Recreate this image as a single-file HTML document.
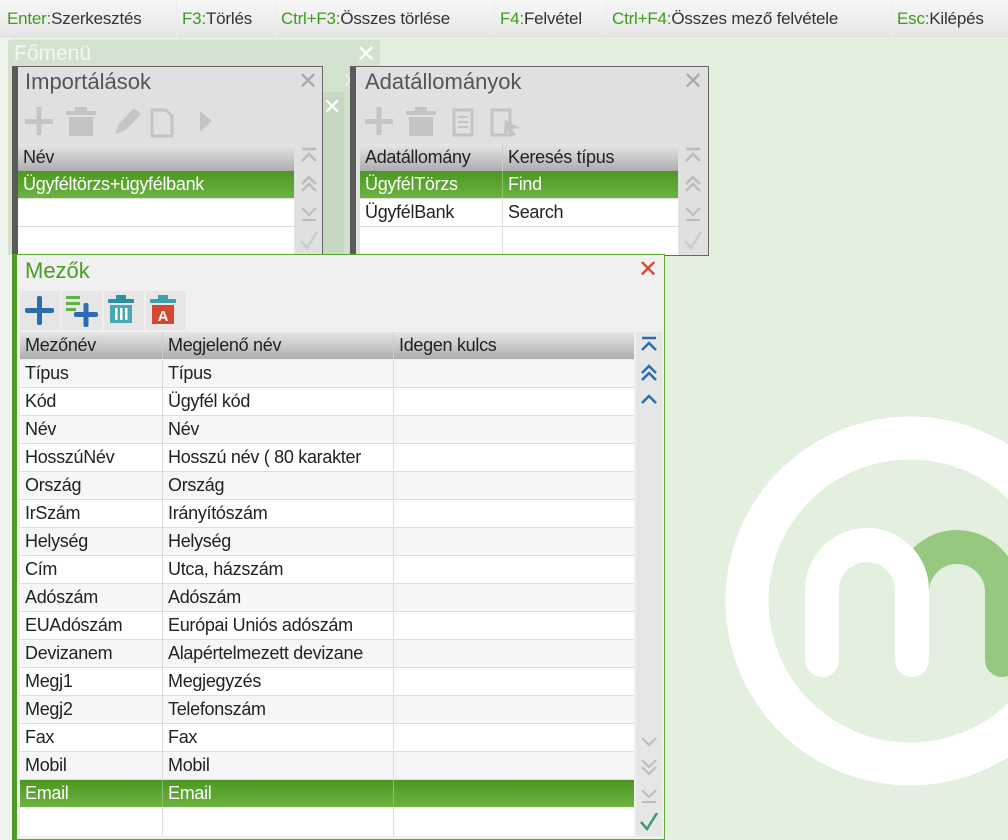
<!DOCTYPE html>
<html><head><meta charset="utf-8"><style>
*{margin:0;padding:0;box-sizing:border-box}
body{width:1008px;height:840px;overflow:hidden;background:#e3f0df;font-family:"Liberation Sans",sans-serif;position:relative;color:#222}
.abs{position:absolute}
.bar{left:0;top:0;width:1008px;height:37px;background:linear-gradient(#f7f7f7,#e6e6e6);border-bottom:1px solid #ddd}
.bar span{position:absolute;top:9px;font-size:17px;color:#333;white-space:nowrap;letter-spacing:-0.2px}
.bar b{font-weight:normal;color:#3e9b1c}
.sep{position:absolute;top:0;width:1px;height:37px;background:#ececec}
.win{position:absolute;background:#e0e0e0;border:1px solid #666;border-left:6px solid #5a5a5a}
.title{position:absolute;font-size:22px;color:#555}
.x{position:absolute;font-size:24px;color:#aaa;line-height:24px}
.cell{position:absolute;font-size:18px;line-height:27px;padding-left:5px;white-space:nowrap;overflow:hidden;letter-spacing:-0.3px}
.hdr{background:linear-gradient(#e6e6e6,#adadad)}
.sel{background:linear-gradient(#4b9720,#6db343);color:#fff}
.scroll{position:absolute;background:#e6e6e6}
svg.sb{position:absolute;width:26px;height:26px}
</style></head><body>
<svg width="0" height="0" style="position:absolute">
<defs>
<symbol id="top" viewBox="0 0 26 26"><path d="M6 5 H20 M6 17 L13 10 L20 17" fill="none" stroke="currentColor" stroke-width="2.5"/></symbol>
<symbol id="dup" viewBox="0 0 26 26"><path d="M6 13 L13 6 L20 13 M6 20 L13 13 L20 20" fill="none" stroke="currentColor" stroke-width="2.5"/></symbol>
<symbol id="up" viewBox="0 0 26 26"><path d="M6 17 L13 10 L20 17" fill="none" stroke="currentColor" stroke-width="2.5"/></symbol>
<symbol id="down" viewBox="0 0 26 26"><path d="M6 10 L13 17 L20 10" fill="none" stroke="currentColor" stroke-width="2"/></symbol>
<symbol id="ddown" viewBox="0 0 26 26"><path d="M6 6 L13 13 L20 6 M6 13 L13 20 L20 13" fill="none" stroke="currentColor" stroke-width="2"/></symbol>
<symbol id="bot" viewBox="0 0 26 26"><path d="M6 9 L13 16 L20 9 M6 21 H20" fill="none" stroke="currentColor" stroke-width="2"/></symbol>
<symbol id="chk" viewBox="0 0 26 26"><path d="M5 14 L11 21 L21 5" fill="none" stroke="currentColor" stroke-width="2.5"/></symbol>
</defs></svg>

<div class="abs bar">
<span style="left:7px"><b>Enter:</b>Szerkesztés</span>
<div class="sep" style="left:176px"></div>
<span style="left:182px"><b>F3:</b>Törlés</span>
<div class="sep" style="left:275px"></div>
<span style="left:281px"><b>Ctrl+F3:</b>Összes törlése</span>
<div class="sep" style="left:494px"></div>
<span style="left:500px"><b>F4:</b>Felvétel</span>
<div class="sep" style="left:606px"></div>
<span style="left:612px"><b>Ctrl+F4:</b>Összes mező felvétele</span>
<div class="sep" style="left:891px"></div>
<span style="left:897px"><b>Esc:</b>Kilépés</span>
</div>

<!-- logo -->
<svg class="abs" style="left:0;top:0" width="1008" height="840">
<circle cx="910" cy="601" r="163" fill="none" stroke="#fff" stroke-width="43"/>
<path d="M912 592 A45 45 0 0 1 1002 592 L1002 660" fill="none" stroke="#96c880" stroke-width="34" stroke-linecap="round"/>
<path d="M822 660 L822 590 A45 45 0 0 1 912 590 L912 660" fill="none" stroke="#fff" stroke-width="34" stroke-linecap="round"/>
<rect x="0" y="38" width="12" height="802" fill="#eef3ec"/>
</svg>

<!-- back windows -->
<div class="abs" style="left:8px;top:40px;width:372px;height:215px;background:#d3e2cf"></div>
<div class="abs" style="left:14px;top:42px;font-size:21px;color:#f4f8f2">Főmenü</div>
<div class="abs" style="left:356px;top:40px;font-size:24px;color:#fff">✕</div>
<div class="abs" style="left:322px;top:92px;width:22px;height:163px;background:#c6d7c2"></div>
<div class="abs" style="left:323px;top:94px;font-size:22px;color:#fff">✕</div>
<div class="abs" style="left:342px;top:68px;font-size:22px;color:#eee">✕</div>

<!-- Importálások -->
<div class="win" style="left:12px;top:66px;width:311px;height:190px"></div>
<div class="title" style="left:25px;top:69px">Importálások</div>
<div class="x" style="left:298px;top:70px">✕</div>
<svg class="abs" style="left:22px;top:104px" width="200" height="34">
<g fill="#c4c4c4">
<rect x="3" y="15" width="28" height="5"/><rect x="14.5" y="3" width="5" height="28"/>
<rect x="44" y="7" width="30" height="4"/><rect x="53" y="3" width="12" height="4"/><rect x="47" y="13" width="24" height="19"/>
<path d="M93 30 L97 20 L112 4 L119 10 L104 26 Z"/>
<path d="M130 6 h14 l6 6 v20 h-20 z" fill="none" stroke="#c4c4c4" stroke-width="3"/>
<path d="M178 7 L190 17 L178 28 Z"/>
</g></svg>
<div class="cell hdr" style="left:18px;top:144px;width:276px">Név</div>
<div class="cell sel" style="left:18px;top:171px;width:276px">Ügyféltörzs+ügyfélbank</div>
<div class="cell" style="left:18px;top:199px;width:276px;background:#fff;border-bottom:1px solid #ddd">&nbsp;</div>
<div class="cell" style="left:18px;top:227px;width:276px;height:28px;background:#fff">&nbsp;</div>
<svg class="sb" style="left:296px;top:144px;color:#bbb"><use href="#top"/></svg>
<svg class="sb" style="left:296px;top:171px;color:#bbb"><use href="#dup"/></svg>
<svg class="sb" style="left:296px;top:199px;color:#bbb"><use href="#bot"/></svg>
<svg class="sb" style="left:296px;top:227px;color:#ccc"><use href="#chk"/></svg>

<!-- Adatállományok -->
<div class="win" style="left:350px;top:66px;width:359px;height:190px"></div>
<div class="title" style="left:365px;top:69px">Adatállományok</div>
<div class="x" style="left:683px;top:70px">✕</div>
<svg class="abs" style="left:362px;top:104px" width="170" height="34">
<g fill="#c4c4c4">
<rect x="3" y="15" width="28" height="5"/><rect x="14.5" y="3" width="5" height="28"/>
<rect x="44" y="7" width="30" height="4"/><rect x="53" y="3" width="12" height="4"/><rect x="47" y="13" width="24" height="19"/>
<rect x="92" y="6" width="18" height="25" fill="none" stroke="#c4c4c4" stroke-width="3"/>
<rect x="96" y="12" width="10" height="2"/><rect x="96" y="17" width="10" height="2"/><rect x="96" y="22" width="10" height="2"/>
<rect x="130" y="6" width="18" height="25" fill="none" stroke="#c4c4c4" stroke-width="3"/>
<path d="M143 16 L158 24 L150 25 L154 31 L150 32 L146 27 L142 31 Z"/>
</g></svg>
<div class="cell hdr" style="left:360px;top:144px;width:143px;border-right:1px solid #ccc">Adatállomány</div>
<div class="cell hdr" style="left:503px;top:144px;width:175px">Keresés típus</div>
<div class="cell sel" style="left:360px;top:171px;width:143px;border-right:1px solid #8bc36a">ÜgyfélTörzs</div>
<div class="cell sel" style="left:503px;top:171px;width:175px">Find</div>
<div class="cell" style="left:360px;top:199px;width:143px;background:#fff;border-right:1px solid #ddd;border-bottom:1px solid #ddd">ÜgyfélBank</div>
<div class="cell" style="left:503px;top:199px;width:175px;background:#fff;border-bottom:1px solid #ddd">Search</div>
<div class="cell" style="left:360px;top:227px;width:143px;height:28px;background:#fff;border-right:1px solid #ddd">&nbsp;</div>
<div class="cell" style="left:503px;top:227px;width:175px;height:28px;background:#fff">&nbsp;</div>
<svg class="sb" style="left:680px;top:144px;color:#bbb"><use href="#top"/></svg>
<svg class="sb" style="left:680px;top:171px;color:#bbb"><use href="#dup"/></svg>
<svg class="sb" style="left:680px;top:199px;color:#bbb"><use href="#bot"/></svg>
<svg class="sb" style="left:680px;top:227px;color:#ccc"><use href="#chk"/></svg>

<!-- Mezők -->
<div class="abs" style="left:12px;top:254px;width:653px;height:586px;background:#f0f0f0;border:1px solid #5aa832;border-left:5px solid #4e9d27"></div>
<div class="title" style="left:25px;top:258px;color:#4b9d22">Mezők</div>
<div class="abs" style="left:638px;top:257px;font-size:24px;color:#d9472f;line-height:26px">✕</div>
<div class="abs" style="left:20px;top:291px;width:40px;height:39px;background:#e6e6e6"></div>
<div class="abs" style="left:62px;top:291px;width:40px;height:39px;background:#e6e6e6"></div>
<div class="abs" style="left:104px;top:291px;width:40px;height:39px;background:#e6e6e6"></div>
<div class="abs" style="left:146px;top:291px;width:40px;height:39px;background:#e6e6e6"></div>
<svg class="abs" style="left:20px;top:291px" width="170" height="40">
<rect x="5" y="17" width="29" height="5" rx="2" fill="#2d6cb0"/><rect x="17" y="5" width="5" height="29" rx="2" fill="#2d6cb0"/>
<rect x="46" y="5" width="14" height="3" fill="#5db248"/><rect x="46" y="11" width="14" height="3" fill="#5db248"/><rect x="46" y="17" width="10" height="3" fill="#5db248"/>
<rect x="54" y="21" width="24" height="5" rx="2" fill="#2d6cb0"/><rect x="63.5" y="12" width="5" height="24" rx="2" fill="#2d6cb0"/>
<rect x="88" y="8" width="26" height="4" rx="1" fill="#2e8fa4"/><rect x="96" y="4" width="10" height="4" fill="#2e8fa4"/>
<path d="M90 14 h22 v18 h-22 z" fill="#46a8b5"/><rect x="95" y="17" width="2.5" height="12" fill="#fff"/><rect x="100" y="17" width="2.5" height="12" fill="#fff"/><rect x="105" y="17" width="2.5" height="12" fill="#fff"/>
<rect x="130" y="8" width="26" height="4" rx="1" fill="#3aa0ad"/><rect x="138" y="4" width="10" height="4" fill="#3aa0ad"/>
<rect x="132" y="14" width="22" height="19" fill="#d94630"/>
<text x="143" y="30" font-family="Liberation Sans" font-size="15" font-weight="bold" fill="#fff" text-anchor="middle">A</text>
</svg>

<div class="cell hdr" style="left:20px;top:332px;width:143px;border-right:1px solid #ccc">Mezőnév</div>
<div class="cell hdr" style="left:163px;top:332px;width:231px;border-right:1px solid #ccc">Megjelenő név</div>
<div class="cell hdr" style="left:394px;top:332px;width:240px">Idegen kulcs</div>

<div class="scroll" style="left:636px;top:332px;width:26px;height:504px"></div>
<svg class="sb" style="left:636px;top:333px;color:#2d6cb0"><use href="#top"/></svg>
<svg class="sb" style="left:636px;top:360px;color:#2d6cb0"><use href="#dup"/></svg>
<svg class="sb" style="left:636px;top:386px;color:#2d6cb0"><use href="#up"/></svg>
<svg class="sb" style="left:636px;top:728px;color:#bbb"><use href="#down"/></svg>
<svg class="sb" style="left:636px;top:754px;color:#bbb"><use href="#ddown"/></svg>
<svg class="sb" style="left:636px;top:781px;color:#bbb"><use href="#bot"/></svg>
<svg class="sb" style="left:636px;top:808px;color:#3e9b6a"><use href="#chk"/></svg>

<div>
<div class="cell" style="left:20px;top:360px;width:143px;background:#f6f6f6;border-right:1px solid #ddd;border-bottom:1px solid #ddd">Típus</div><div class="cell" style="left:163px;top:360px;width:231px;background:#f6f6f6;border-right:1px solid #ddd;border-bottom:1px solid #ddd">Típus</div><div class="cell" style="left:394px;top:360px;width:240px;background:#f6f6f6;border-bottom:1px solid #ddd">&nbsp;</div>
<div class="cell" style="left:20px;top:388px;width:143px;background:#fff;border-right:1px solid #ddd;border-bottom:1px solid #ddd">Kód</div><div class="cell" style="left:163px;top:388px;width:231px;background:#fff;border-right:1px solid #ddd;border-bottom:1px solid #ddd">Ügyfél kód</div><div class="cell" style="left:394px;top:388px;width:240px;background:#fff;border-bottom:1px solid #ddd">&nbsp;</div>
<div class="cell" style="left:20px;top:416px;width:143px;background:#f6f6f6;border-right:1px solid #ddd;border-bottom:1px solid #ddd">Név</div><div class="cell" style="left:163px;top:416px;width:231px;background:#f6f6f6;border-right:1px solid #ddd;border-bottom:1px solid #ddd">Név</div><div class="cell" style="left:394px;top:416px;width:240px;background:#f6f6f6;border-bottom:1px solid #ddd">&nbsp;</div>
<div class="cell" style="left:20px;top:444px;width:143px;background:#fff;border-right:1px solid #ddd;border-bottom:1px solid #ddd">HosszúNév</div><div class="cell" style="left:163px;top:444px;width:231px;background:#fff;border-right:1px solid #ddd;border-bottom:1px solid #ddd">Hosszú név ( 80 karakter</div><div class="cell" style="left:394px;top:444px;width:240px;background:#fff;border-bottom:1px solid #ddd">&nbsp;</div>
<div class="cell" style="left:20px;top:472px;width:143px;background:#f6f6f6;border-right:1px solid #ddd;border-bottom:1px solid #ddd">Ország</div><div class="cell" style="left:163px;top:472px;width:231px;background:#f6f6f6;border-right:1px solid #ddd;border-bottom:1px solid #ddd">Ország</div><div class="cell" style="left:394px;top:472px;width:240px;background:#f6f6f6;border-bottom:1px solid #ddd">&nbsp;</div>
<div class="cell" style="left:20px;top:500px;width:143px;background:#fff;border-right:1px solid #ddd;border-bottom:1px solid #ddd">IrSzám</div><div class="cell" style="left:163px;top:500px;width:231px;background:#fff;border-right:1px solid #ddd;border-bottom:1px solid #ddd">Irányítószám</div><div class="cell" style="left:394px;top:500px;width:240px;background:#fff;border-bottom:1px solid #ddd">&nbsp;</div>
<div class="cell" style="left:20px;top:528px;width:143px;background:#f6f6f6;border-right:1px solid #ddd;border-bottom:1px solid #ddd">Helység</div><div class="cell" style="left:163px;top:528px;width:231px;background:#f6f6f6;border-right:1px solid #ddd;border-bottom:1px solid #ddd">Helység</div><div class="cell" style="left:394px;top:528px;width:240px;background:#f6f6f6;border-bottom:1px solid #ddd">&nbsp;</div>
<div class="cell" style="left:20px;top:556px;width:143px;background:#fff;border-right:1px solid #ddd;border-bottom:1px solid #ddd">Cím</div><div class="cell" style="left:163px;top:556px;width:231px;background:#fff;border-right:1px solid #ddd;border-bottom:1px solid #ddd">Utca, házszám</div><div class="cell" style="left:394px;top:556px;width:240px;background:#fff;border-bottom:1px solid #ddd">&nbsp;</div>
<div class="cell" style="left:20px;top:584px;width:143px;background:#f6f6f6;border-right:1px solid #ddd;border-bottom:1px solid #ddd">Adószám</div><div class="cell" style="left:163px;top:584px;width:231px;background:#f6f6f6;border-right:1px solid #ddd;border-bottom:1px solid #ddd">Adószám</div><div class="cell" style="left:394px;top:584px;width:240px;background:#f6f6f6;border-bottom:1px solid #ddd">&nbsp;</div>
<div class="cell" style="left:20px;top:612px;width:143px;background:#fff;border-right:1px solid #ddd;border-bottom:1px solid #ddd">EUAdószám</div><div class="cell" style="left:163px;top:612px;width:231px;background:#fff;border-right:1px solid #ddd;border-bottom:1px solid #ddd">Európai Uniós adószám</div><div class="cell" style="left:394px;top:612px;width:240px;background:#fff;border-bottom:1px solid #ddd">&nbsp;</div>
<div class="cell" style="left:20px;top:640px;width:143px;background:#f6f6f6;border-right:1px solid #ddd;border-bottom:1px solid #ddd">Devizanem</div><div class="cell" style="left:163px;top:640px;width:231px;background:#f6f6f6;border-right:1px solid #ddd;border-bottom:1px solid #ddd">Alapértelmezett devizane</div><div class="cell" style="left:394px;top:640px;width:240px;background:#f6f6f6;border-bottom:1px solid #ddd">&nbsp;</div>
<div class="cell" style="left:20px;top:668px;width:143px;background:#fff;border-right:1px solid #ddd;border-bottom:1px solid #ddd">Megj1</div><div class="cell" style="left:163px;top:668px;width:231px;background:#fff;border-right:1px solid #ddd;border-bottom:1px solid #ddd">Megjegyzés</div><div class="cell" style="left:394px;top:668px;width:240px;background:#fff;border-bottom:1px solid #ddd">&nbsp;</div>
<div class="cell" style="left:20px;top:696px;width:143px;background:#f6f6f6;border-right:1px solid #ddd;border-bottom:1px solid #ddd">Megj2</div><div class="cell" style="left:163px;top:696px;width:231px;background:#f6f6f6;border-right:1px solid #ddd;border-bottom:1px solid #ddd">Telefonszám</div><div class="cell" style="left:394px;top:696px;width:240px;background:#f6f6f6;border-bottom:1px solid #ddd">&nbsp;</div>
<div class="cell" style="left:20px;top:724px;width:143px;background:#fff;border-right:1px solid #ddd;border-bottom:1px solid #ddd">Fax</div><div class="cell" style="left:163px;top:724px;width:231px;background:#fff;border-right:1px solid #ddd;border-bottom:1px solid #ddd">Fax</div><div class="cell" style="left:394px;top:724px;width:240px;background:#fff;border-bottom:1px solid #ddd">&nbsp;</div>
<div class="cell" style="left:20px;top:752px;width:143px;background:#f6f6f6;border-right:1px solid #ddd;border-bottom:1px solid #ddd">Mobil</div><div class="cell" style="left:163px;top:752px;width:231px;background:#f6f6f6;border-right:1px solid #ddd;border-bottom:1px solid #ddd">Mobil</div><div class="cell" style="left:394px;top:752px;width:240px;background:#f6f6f6;border-bottom:1px solid #ddd">&nbsp;</div>
<div class="cell sel" style="left:20px;top:780px;width:143px;border-right:1px solid #8bc36a">Email</div><div class="cell sel" style="left:163px;top:780px;width:231px;border-right:1px solid #8bc36a">Email</div><div class="cell sel" style="left:394px;top:780px;width:240px">&nbsp;</div>
<div class="cell" style="left:20px;top:808px;width:143px;height:28px;background:#fff;border-right:1px solid #ddd">&nbsp;</div><div class="cell" style="left:163px;top:808px;width:231px;height:28px;background:#fff;border-right:1px solid #ddd">&nbsp;</div><div class="cell" style="left:394px;top:808px;width:240px;height:28px;background:#fff">&nbsp;</div>
</div>
</body></html>
